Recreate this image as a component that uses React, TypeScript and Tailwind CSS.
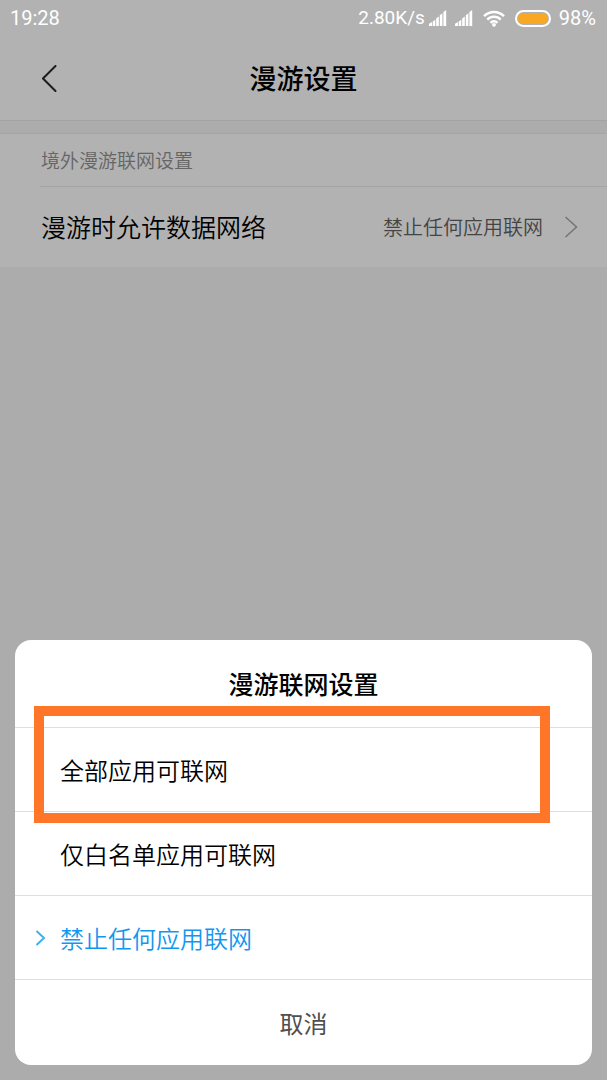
const options = [
  { label: "全部应用可联网", selected: false, marked: true },
  { label: "仅白名单应用可联网", selected: false, marked: false },
  { label: "禁止任何应用联网", selected: true, marked: false },
];

const SignalIcon = () => {
  return (
    <svg width="18" height="16" viewBox="0 0 18 16" fill="white">
      <path d="M0 16v-2.200l3-1.800v4z" />
      <path d="M3.700 11.500l2.600-1.700V16H3.700z" />
      <path d="M7.200 8.500l2.600-2V16H7.200z" />
      <path d="M10.800 5.200l2.600-2V16h-2.600z" />
      <path d="M14.400 2L17.200 0v16h-2.800z" />
    </svg>
  );
};

const WifiIcon = () => {
  return (
    <svg width="22" height="17" viewBox="0 0 22 17" fill="none">
      <g stroke="white" strokeWidth="2.400">
        <path d="M1 6.200C6.500 0.600 15.500 0.600 21 6.200" />
        <path d="M4.300 9.600C8 5.800 14 5.800 17.700 9.600" />
        <path d="M7.500 12.800C9.500 10.700 12.500 10.700 14.500 12.800" />
      </g>
      <circle cx="11" cy="14.800" r="1.900" fill="white" />
    </svg>
  );
};

const StatusBar = () => {
  return (
    <div className="h-9 pl-2.5 pr-[11px] flex items-center justify-between font-['Roboto',sans-serif] font-normal text-xl leading-9 text-white">
      <span>19:28</span>
      <div className="flex items-center">
        <span className="text-[19px] mr-1">2.80K/s</span>
        <SignalIcon />
        <span className="w-2" />
        <SignalIcon />
        <span className="w-2.5" />
        <WifiIcon />
        {/* Battery */}
        <span className="ml-2.5 mr-2 w-9 h-[17px] rounded-full border-2 border-white p-px flex">
          <span className="flex-1 rounded-full bg-[#f8a823]" />
        </span>
        <span>98%</span>
      </div>
    </div>
  );
};

const Header = () => {
  return (
    <header className="h-[85px] px-8 grid grid-cols-[40px_1fr_40px] items-center border-b border-[#a3a3a3]">
      <button type="button" aria-label="返回" className="h-10 pl-2.5">
        <svg width="15" height="27" viewBox="0 0 15 27" fill="none">
          <path
            d="M13.500 1L1 13.500L13.500 26"
            stroke="#1c1c1c"
            strokeWidth="2"
            strokeLinecap="round"
          />
        </svg>
      </button>
      <h1 className="text-center text-[27px] leading-10 font-medium text-black">
        漫游设置
      </h1>
    </header>
  );
};

const OptionSheet = () => {
  return (
    <div className="fixed inset-0 flex items-end px-[15px] pb-[15px]">
      <div
        role="dialog"
        aria-labelledby="sheet-title"
        className="w-full bg-white rounded-2xl"
      >
        <h2
          id="sheet-title"
          className="h-22 flex items-center justify-center border-b border-[#dedede] text-[25px] font-medium text-black"
        >
          漫游联网设置
        </h2>
        <ul>
          {options.map((option) => (
            <li key={option.label} className="relative border-b border-[#dedede]">
              <button
                type="button"
                className={
                  option.selected
                    ? "w-full h-[83px] pl-5 flex items-center text-2xl text-[#1296f0]"
                    : "w-full h-[83px] pl-5 flex items-center text-2xl text-black"
                }
              >
                <span className="w-[25px]">
                  {option.selected && (
                    <svg width="12" height="18" viewBox="0 0 12 18" fill="none">
                      <path d="M1.500 2L9 9L1.500 16" stroke="#3fb0f2" strokeWidth="2" />
                    </svg>
                  )}
                </span>
                {option.label}
              </button>
              {/* Highlight frame around the option to pick */}
              {option.marked && (
                <div className="absolute z-10 left-[19px] right-[42px] -top-[22px] -bottom-3 border-10 border-[#ff7629] pointer-events-none" />
              )}
            </li>
          ))}
        </ul>
        <button
          type="button"
          className="w-full h-[85px] text-2xl font-normal text-[#505050]"
        >
          取消
        </button>
      </div>
    </div>
  );
};

const App = () => {
  return (
    <div className="min-h-screen bg-[#acacac] font-['Noto_Sans_CJK_SC',sans-serif] font-[350]">
      <div className="bg-[#b2b2b2]">
        <StatusBar />
        <Header />
      </div>

      <main>
        <section className="mt-3 bg-[#b2b2b2] border-t border-[#a5a5a5]">
          <h2 className="ml-10 pl-px h-[53px] flex items-center border-b border-[#a5a5a5] text-[19px] font-[350] text-[#656565]">
            境外漫游联网设置
          </h2>
          <button
            type="button"
            className="w-full h-20 pl-[41px] pr-[29px] flex items-center text-[25px] text-black"
          >
            漫游时允许数据网络
            <span className="ml-auto mr-[21px] text-xl text-[#444444]">
              禁止任何应用联网
            </span>
            <svg width="14" height="22" viewBox="0 0 14 22" fill="none">
              <path d="M1.500 1L12.500 11L1.500 21" stroke="#747474" strokeWidth="1.500" />
            </svg>
          </button>
        </section>
      </main>

      <OptionSheet />
    </div>
  );
};

export default App;
